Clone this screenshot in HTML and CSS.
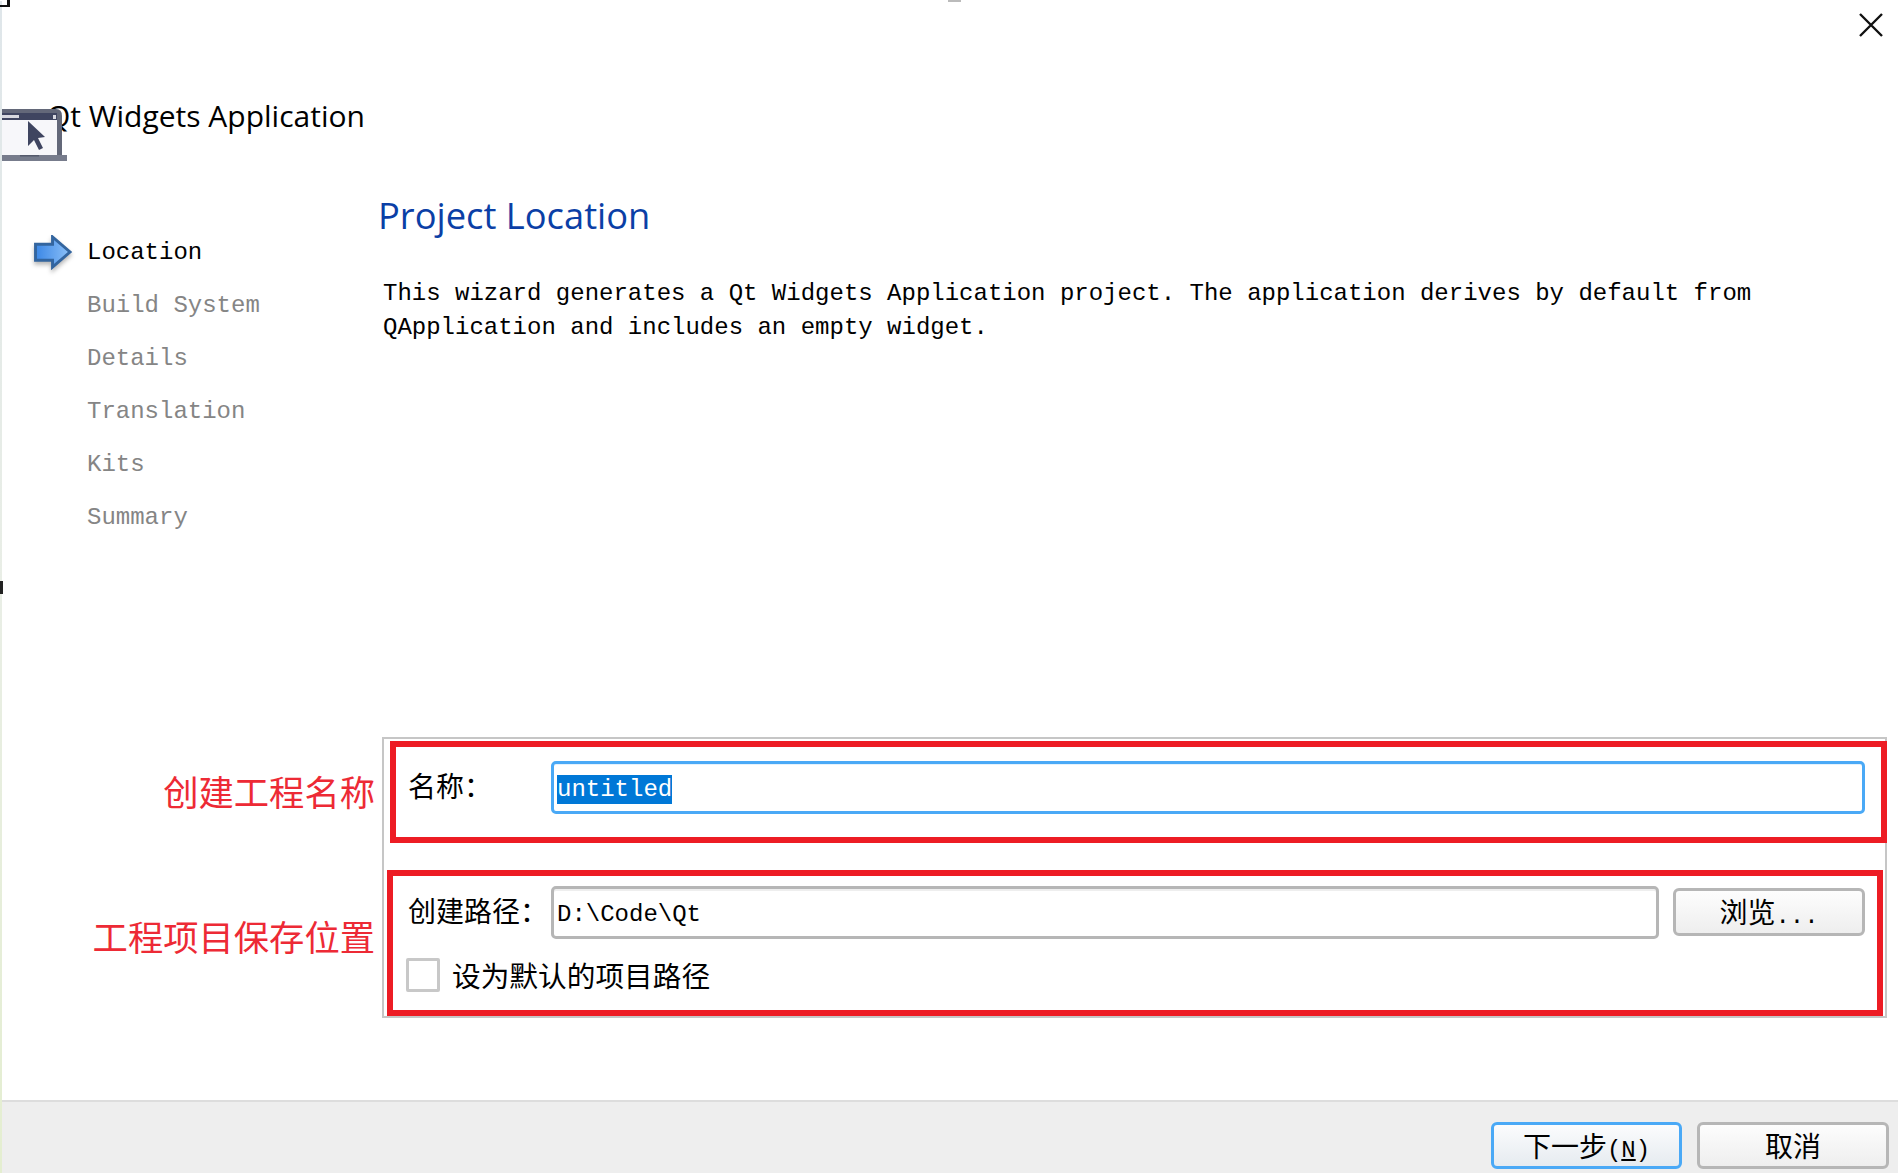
FILE: index.html
```html
<!DOCTYPE html>
<html lang="en">
<head>
<meta charset="utf-8">
<title>Qt Widgets Application</title>
<link rel="stylesheet" href="styles.css">
</head>
<body>
<div class="window">
  <span class="corner-mark"></span>
  <span class="top-mark"></span>
  <span class="side-mark"></span>
  <div class="closebar">
    <svg class="close-icon" viewBox="0 0 24 24" aria-label="close"><path d="M1 1 L23 23 M23 1 L1 23"/></svg>
  </div>
  <div class="app-title">Qt Widgets Application</div>
  <svg class="app-icon" viewBox="0 0 66 54" aria-hidden="true">
    <path d="M0 1 H54 Q60 1 60 8 V47 H0 Z" fill="#636879"/>
    <rect x="0" y="12" width="55" height="35" fill="#f7f7fa"/>
    <rect x="0" y="5" width="55" height="7" fill="#3f4560"/>
    <rect x="0" y="7" width="17" height="3" fill="#d8d9e0"/>
    <rect x="51" y="7" width="3" height="4" fill="#d8d9e0"/>
    <rect x="0" y="47" width="65" height="6" fill="#777c8c"/>
    <rect x="18" y="47" width="19" height="1.5" fill="#555a6c"/>
    <path d="M26 13 V38 L32 32 L37 42 L41 40 L36 30 L43 29 Z" fill="#3f4560"/>
  </svg>
  <div class="wizard">
    <ul class="steps">
      <li class="step step-current">
        <span class="step-slot">
          <svg class="arrow-icon" viewBox="0 0 40 36" aria-hidden="true">
            <defs>
              <linearGradient id="arrowFill" x1="0" y1="0" x2="1" y2="0">
                <stop offset="0" stop-color="#3b87e6"/>
                <stop offset="1" stop-color="#8cc0f7"/>
              </linearGradient>
            </defs>
            <path d="M1.5 9.5 H19 V2 L37 17.5 L19 33 V26 H1.5 Z" fill="url(#arrowFill)" stroke="#33659f" stroke-width="3"/>
          </svg>
        </span>
        <span>Location</span>
      </li>
      <li class="step"><span class="step-slot"></span><span>Build System</span></li>
      <li class="step"><span class="step-slot"></span><span>Details</span></li>
      <li class="step"><span class="step-slot"></span><span>Translation</span></li>
      <li class="step"><span class="step-slot"></span><span>Kits</span></li>
      <li class="step"><span class="step-slot"></span><span>Summary</span></li>
    </ul>
    <main class="page">
      <h1 class="page-title">Project Location</h1>
      <p class="page-desc">This wizard generates a Qt Widgets Application project. The application derives by default from<br>QApplication and includes an empty widget.</p>
      <section class="group">
        <div class="mark-box mark-name">
          <span class="note note-name">创建工程名称</span>
          <label class="field-label">名称：</label>
          <div class="text-field text-field-focus"><span class="selected">untitled</span></div>
        </div>
        <div class="mark-box mark-path">
          <span class="note note-path">工程项目保存位置</span>
          <div class="path-row">
            <label class="field-label">创建路径：</label>
            <div class="text-field">D:\Code\Qt</div>
            <button class="btn btn-browse">浏览<span class="latin">...</span></button>
          </div>
          <div class="check-row">
            <span class="checkbox"></span>
            <span class="check-label">设为默认的项目路径</span>
          </div>
        </div>
      </section>
    </main>
  </div>
  <footer class="footer">
    <button class="btn btn-primary">下一步<span class="latin">(<u>N</u>)</span></button>
    <button class="btn btn-cancel">取消</button>
  </footer>
</div>
</body>
</html>
```

FILE: styles.css
```css
* { box-sizing: border-box; }
html, body { margin: 0; padding: 0; background: #fff; overflow: hidden; }
body {
  font-family: "Liberation Mono", "Noto Sans CJK SC", monospace;
  color: #000;
}
.window {
  position: relative;
  width: 1898px;
  height: 1173px;
  display: flex;
  flex-direction: column;
  border-left: 2px solid #dfe6ea;
  border-image: linear-gradient(#dfe6ea, #e9eee6 50%, #e4eed0) 1;
  border-top: 1px solid #f2f2f2;
  border-image-slice: 0 0 0 1;
}
.corner-mark {
  position: absolute;
  left: -2px;
  top: -1px;
  width: 10px;
  height: 7px;
  border-right: 3px solid #111;
  border-bottom: 2px solid #111;
}
.top-mark {
  position: absolute;
  left: 946px;
  top: -1px;
  width: 13px;
  height: 2px;
  background: #bbb;
}
.side-mark {
  position: absolute;
  left: -2px;
  top: 580px;
  width: 3px;
  height: 13px;
  background: #222;
}
.closebar {
  height: 49px;
  display: flex;
  justify-content: flex-end;
  align-items: flex-start;
  padding: 12px 15px 0 0;
}
.close-icon { width: 24px; height: 24px; }
.close-icon path { stroke: #111; stroke-width: 2.4; fill: none; }
.app-title {
  margin-top: 46px;
  height: 40px;
  padding-left: 45px;
  font: 30px/40px "Open Sans", "Noto Sans", sans-serif;
}
.app-icon {
  position: absolute;
  left: 0;
  top: 107px;
  width: 66px;
  height: 54px;
}
.wizard {
  flex: 1;
  display: flex;
  min-height: 0;
}
.steps {
  list-style: none;
  margin: 0;
  padding: 90px 0 0 32px;
  width: 376px;
  flex: none;
}
.step {
  display: flex;
  align-items: center;
  height: 53px;
  font-size: 24px;
  color: #858585;
}
.step-current { color: #000; }
.step-slot {
  width: 53px;
  flex: none;
  display: flex;
}
.arrow-icon {
  width: 39px;
  height: 35px;
  margin-top: -1px;
  filter: drop-shadow(0 3px 2px rgba(0, 0, 0, .28));
}
.page {
  flex: 1;
  min-width: 0;
  display: flex;
  flex-direction: column;
  padding: 54px 11px 82px 0;
}
.page-title {
  margin: 0;
  height: 50px;
  font: 400 36.3px/50px "Open Sans", "Noto Sans", sans-serif;
  color: #0b3fa6;
}
.page-desc {
  margin: 37px 0 0 5px;
  font-size: 24px;
  line-height: 34px;
  white-space: nowrap;
}
.group {
  margin: auto 0 0 4px;
  border: 2px solid #c6c6c6;
  padding: 2px 0 0;
  height: 281px;
  display: flex;
  flex-direction: column;
}
.mark-box {
  position: relative;
  border: 6px solid #ed1c24;
}
.mark-name {
  margin: 0 -2px 0 6px;
  height: 102px;
  display: flex;
  align-items: flex-start;
  padding: 14px 16px 0 12px;
}
.mark-path {
  margin: 27px 2px 0 3px;
  height: 146px;
  padding: 10px 12px 0 13px;
}
.note {
  position: absolute;
  font: 35.3px/40px "Noto Sans CJK SC", sans-serif;
  color: #ed2a35;
  white-space: nowrap;
}
.note-name { right: calc(100% + 21px); top: 24px; }
.note-path { right: calc(100% + 18px); top: 40px; }
.field-label {
  flex: none;
  width: 143px;
  height: 53px;
  font: 28px/49px "Noto Sans CJK SC", sans-serif;
}
.text-field {
  flex: 1;
  min-width: 0;
  height: 53px;
  display: flex;
  align-items: center;
  padding: 4px 3px 0;
  border: 3px solid #b6b6b6;
  border-radius: 5px;
  box-shadow: inset 0 2px 0 #eee;
  font-size: 24px;
  background: #fff;
}
.text-field-focus {
  border-color: #4aa9f6;
  box-shadow: inset 0 1px 0 #e4f2fd;
}
.selected {
  background: #0078d7;
  color: #fff;
  line-height: 29px;
}
.path-row {
  display: flex;
  align-items: flex-start;
  padding-left: 2px;
}
.btn {
  flex: none;
  padding: 0 0 2px;
  height: 47px;
  border: 3px solid #b6b6b6;
  border-radius: 6px;
  font: 28px/40px "Noto Sans CJK SC", sans-serif;
  color: #000;
  background: linear-gradient(#fdfdfd, #eeeeee);
}
.latin { font-family: "Liberation Mono", monospace; font-size: 24px; }
.btn-browse {
  width: 192px;
  height: 48px;
  margin: 2px 0 0 14px;
}
.check-row {
  display: flex;
  align-items: center;
  margin-top: 19px;
  gap: 12px;
}
.checkbox {
  width: 34px;
  height: 34px;
  flex: none;
  border: 3px solid #c8c8c8;
  border-radius: 2px;
  background: #fff;
}
.check-label { font: 28.7px/34px "Noto Sans CJK SC", sans-serif; }
.footer {
  flex: none;
  height: 73px;
  display: flex;
  justify-content: flex-end;
  gap: 15px;
  padding: 20px 9px 0 0;
  border-top: 2px solid #dddddd;
  background: #eeeeee;
}
.btn-primary {
  width: 191px;
  border-color: #4aa9f6;
  background: linear-gradient(#fbfcfd, #e6ebf0);
}
.btn-cancel { width: 192px; }
```
